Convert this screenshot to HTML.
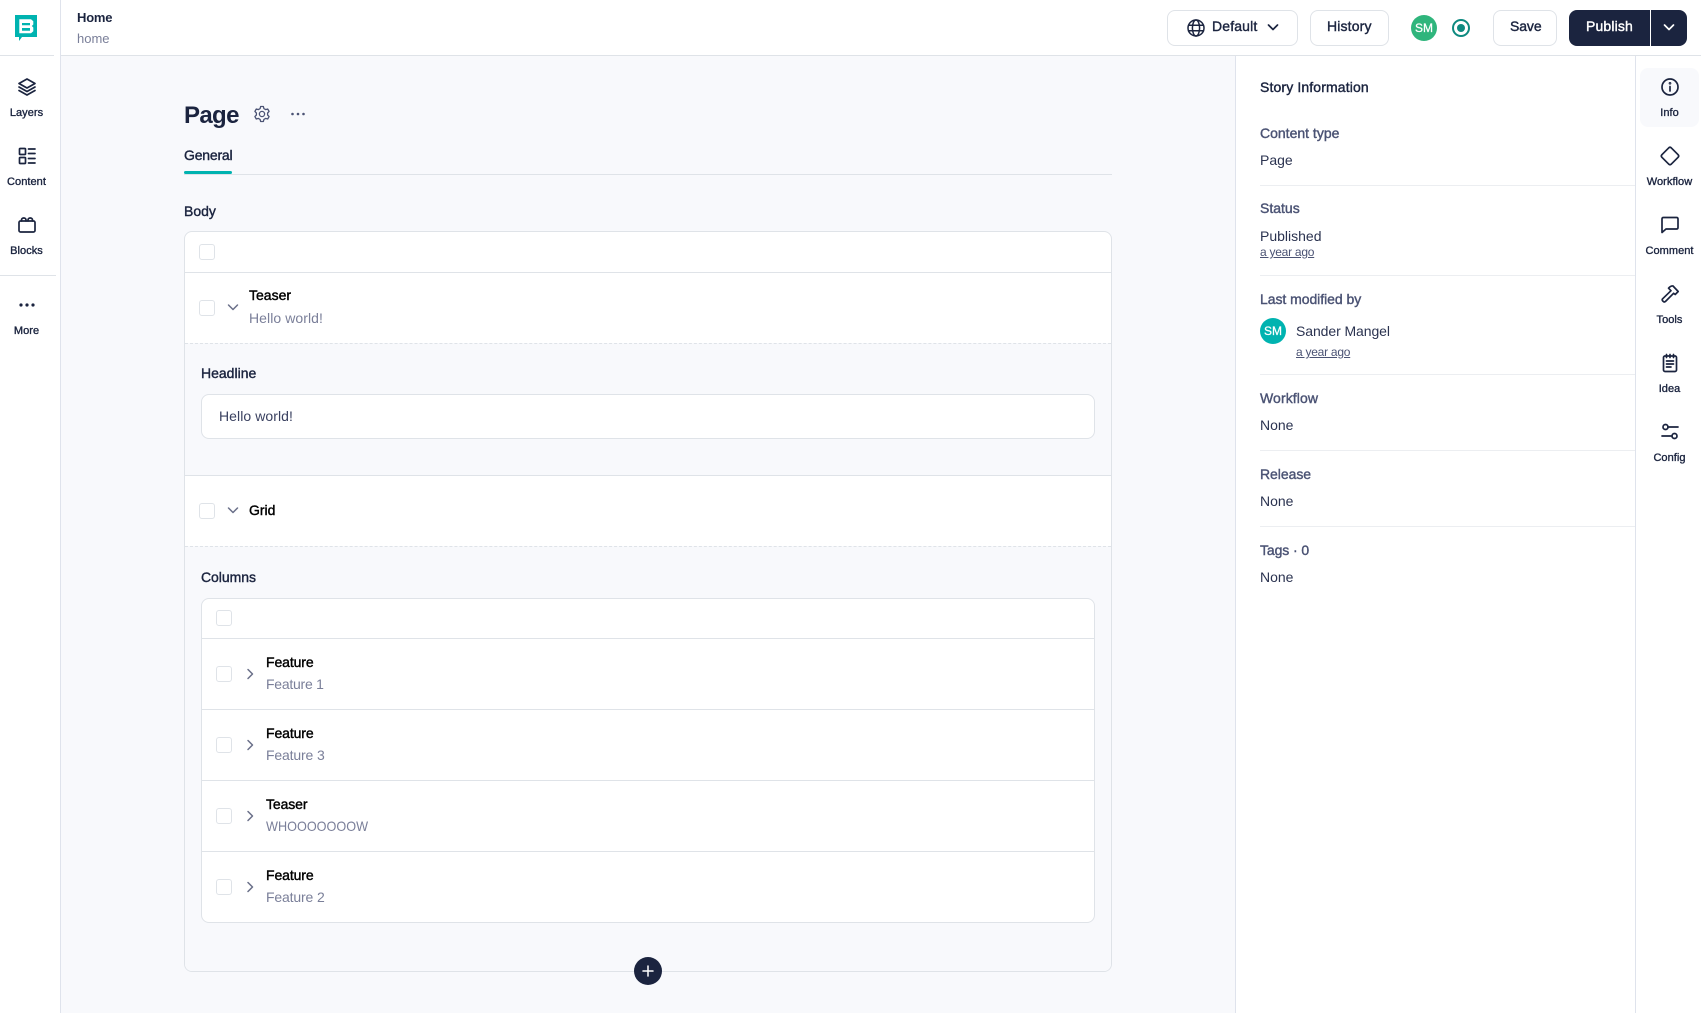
<!DOCTYPE html>
<html lang="en"><head><meta charset="utf-8"><title>Home</title>
<style>
*{box-sizing:border-box}
html,body{margin:0;padding:0}
body{width:1701px;height:1013px;position:relative;overflow:hidden;background:#f8f9fc;font-family:"Liberation Sans",sans-serif;font-size:14px;color:#1b243f}
.a{position:absolute}
.t{position:absolute;white-space:nowrap;line-height:20px;height:20px}
.m{-webkit-text-stroke:.4px currentColor}
.b{font-weight:bold}
.lab{font-size:11px;width:70px;text-align:center;-webkit-text-stroke:.35px currentColor;letter-spacing:.05px}
.mut{color:#4b5374}
.sec{color:#7a7f99}
.blk{color:#000}
.hl{position:absolute;height:1px;background:#dfe3e8}
.hp{position:absolute;height:1px;background:#eceef1;left:1260px;width:375px}
.vl{position:absolute;width:1px;background:#dfe3ec}
.cb{position:absolute;width:16px;height:16px;background:#fff;border:1px solid #dfe3e8;border-radius:3px}
.btn{position:absolute;top:10px;height:36px;background:#fff;border:1px solid #dfe3e8;border-radius:8px}
svg{position:absolute;fill:none;stroke:#1b243f;stroke-width:1.7;stroke-linecap:round;stroke-linejoin:round;overflow:visible}
.ch{stroke:#6a7089;stroke-width:1.5;width:14px;height:14px}
.small{font-size:12px;text-decoration:underline;color:#4b5374;letter-spacing:-.25px}
</style></head><body>

<!-- panels -->
<div class="a" style="left:0;top:0;width:1701px;height:55px;background:#fff"></div>
<div class="a" style="left:0;top:0;width:60px;height:1013px;background:#fff"></div>
<div class="a" style="left:1236px;top:55px;width:465px;height:958px;background:#fff"></div>
<div class="hl" style="left:60px;top:55px;width:1641px"></div>
<div class="hl" style="left:0;top:55px;width:54px"></div>
<div class="hl" style="left:0;top:275px;width:56px"></div>
<div class="vl" style="left:60px;top:0;height:1013px"></div>
<div class="vl" style="left:1235px;top:56px;height:957px"></div>
<div class="vl" style="left:1635px;top:56px;height:957px"></div>

<!-- logo -->
<svg style="left:15px;top:15px;stroke:none" width="22" height="26" viewBox="0 0 22 26"><path fill="#00b3b0" d="M0 0H22V22H7L4 26V22H0Z"/><path fill="#fff" fill-rule="evenodd" d="M4.3 4.3H16L18.3 6.3V9.5L16.8 11L18.3 12.5V16.3L16 18.3H4.3ZM7 8V10.3H15V8ZM7 13V15.7H15V13Z"/></svg>

<!-- left sidebar -->
<svg style="left:17px;top:77px" width="20" height="20" viewBox="0 0 20 20"><path d="M10 2L18 6.5L10 11L2 6.5Z"/><path d="M2 10L10 14.5L18 10"/><path d="M2 13.5L10 18L18 13.5"/></svg>
<div class="t lab" style="left:-8.5px;top:103px">Layers</div>
<svg style="left:17px;top:146px" width="20" height="20" viewBox="0 0 20 20"><rect x="2.5" y="2.5" width="6" height="6" rx=".8"/><rect x="2.5" y="11.5" width="6" height="6" rx=".8"/><path d="M11.5 3H18M11.5 7.5H18M11.5 12.5H18M11.5 17H18"/></svg>
<div class="t lab" style="left:-8.5px;top:172px">Content</div>
<svg style="left:17px;top:215px" width="20" height="20" viewBox="0 0 20 20"><rect x="2" y="6" width="16" height="11" rx="1.5"/><path d="M4.5 6V5A2 2 0 0 1 6.5 3H7A2 2 0 0 1 9 5V6M11 6V5A2 2 0 0 1 13 3H13.5A2 2 0 0 1 15.5 5V6"/></svg>
<div class="t lab" style="left:-8.5px;top:241px">Blocks</div>
<svg style="left:17px;top:295px;stroke:none;fill:#1b243f" width="20" height="20" viewBox="0 0 20 20"><circle cx="4" cy="10" r="1.6"/><circle cx="10" cy="10" r="1.6"/><circle cx="16" cy="10" r="1.6"/></svg>
<div class="t lab" style="left:-8.5px;top:321px">More</div>

<!-- header -->
<div class="t b" style="left:77px;top:8px;font-size:13px;letter-spacing:-.2px">Home</div>
<div class="t sec" style="left:77px;top:29px;font-size:13px">home</div>

<div class="btn" style="left:1167px;width:131px"></div>
<svg style="left:1187px;top:19px;stroke-width:1.5" width="18" height="18" viewBox="0 0 18 18"><circle cx="9" cy="9" r="8"/><ellipse cx="9" cy="9" rx="3.6" ry="8"/><path d="M1.5 6.2H16.5M1.5 11.8H16.5"/></svg>
<div class="t m" style="left:1212px;top:16px;letter-spacing:.15px">Default</div>
<svg style="left:1266px;top:20px;width:14px;height:14px" viewBox="0 0 14 14"><path d="M2.5 5L7 9.5L11.5 5"/></svg>

<div class="btn" style="left:1310px;width:79px"></div>
<div class="t m" style="left:1327px;top:16px;letter-spacing:.15px">History</div>

<div class="a" style="left:1411px;top:15px;width:26px;height:26px;border-radius:50%;background:#2fb57c;color:#fff;font-size:12px;line-height:27px;text-align:center;-webkit-text-stroke:.25px #fff">SM</div>
<div class="a" style="left:1452px;top:19px;width:18px;height:18px;border-radius:50%;border:2px solid #0e8a80"></div>
<div class="a" style="left:1457px;top:24px;width:8px;height:8px;border-radius:50%;background:#0e8a80"></div>

<div class="btn" style="left:1493px;width:64px"></div>
<div class="t m" style="left:1510px;top:16px;letter-spacing:-.1px">Save</div>

<div class="a" style="left:1569px;top:10px;width:81px;height:36px;background:#1b243f;border-radius:8px 0 0 8px"></div>
<div class="a" style="left:1651px;top:10px;width:36px;height:36px;background:#1b243f;border-radius:0 8px 8px 0"></div>
<div class="t m" style="left:1586px;top:16px;color:#fff;letter-spacing:.15px">Publish</div>
<svg style="left:1662px;top:20px;width:14px;height:14px;stroke:#fff" viewBox="0 0 14 14"><path d="M2.5 5L7 9.5L11.5 5"/></svg>

<!-- title -->
<div class="t b" style="left:184px;top:106px;font-size:24px;line-height:20px;letter-spacing:-.65px">Page</div>
<svg style="left:253px;top:105px;stroke:#4b5374;stroke-width:1.3" width="18" height="18" viewBox="0 0 18 18"><circle cx="9" cy="9" r="2.6"/><path d="M7.6 1.5H10.4L10.9 3.6L12.6 4.6L14.7 4L16.1 6.4L14.6 8V10L16.1 11.6L14.7 14L12.6 13.4L10.9 14.4L10.4 16.5H7.6L7.1 14.4L5.4 13.4L3.3 14L1.9 11.6L3.4 10V8L1.9 6.4L3.3 4L5.4 4.6L7.1 3.6Z"/></svg>
<svg style="left:290px;top:105px;stroke:none;fill:#4b5374" width="16" height="18" viewBox="0 0 16 18"><circle cx="2.5" cy="9" r="1.3"/><circle cx="8" cy="9" r="1.3"/><circle cx="13.5" cy="9" r="1.3"/></svg>

<div class="t m" style="left:184px;top:145px;letter-spacing:-.2px">General</div>
<div class="hl" style="left:184px;top:174px;width:928px"></div>
<div class="a" style="left:184px;top:171px;width:48px;height:3px;background:#00b3b0;border-radius:2px"></div>

<div class="t m" style="left:184px;top:201px">Body</div>

<!-- outer card -->
<div class="a" style="left:184px;top:231px;width:928px;height:741px;background:#fff;border:1px solid #dfe3e8;border-radius:8px;overflow:hidden">
  <div class="a" style="left:0;top:40px;width:926px;height:1px;background:#dfe3e8"></div>
  <div class="a" style="left:0;top:111px;width:926px;height:133px;background:#f8f9fc;border-top:1px dashed #dfe3e8;border-bottom:1px solid #dfe3e8"></div>
  <div class="a" style="left:0;top:314px;width:926px;height:426px;background:#f8f9fc;border-top:1px dashed #dfe3e8"></div>
</div>
<div class="cb" style="left:199px;top:244px"></div>

<div class="cb" style="left:199px;top:300px"></div>
<svg class="ch" style="left:226px;top:300px" viewBox="0 0 14 14"><path d="M2.5 5L7 9.5L11.5 5"/></svg>
<div class="t m blk" style="left:249px;top:285px">Teaser</div>
<div class="t sec" style="left:249px;top:308px;letter-spacing:.07px">Hello world!</div>

<div class="t m" style="left:201px;top:363px">Headline</div>
<div class="a" style="left:201px;top:394px;width:894px;height:45px;background:#fff;border:1px solid #dfe3e8;border-radius:8px"></div>
<div class="t" style="left:219px;top:406px;color:#3a4160;letter-spacing:.07px">Hello world!</div>

<div class="cb" style="left:199px;top:503px"></div>
<svg class="ch" style="left:226px;top:503px" viewBox="0 0 14 14"><path d="M2.5 5L7 9.5L11.5 5"/></svg>
<div class="t m blk" style="left:249px;top:500px">Grid</div>

<div class="t m" style="left:201px;top:567px;letter-spacing:-.05px">Columns</div>

<!-- inner card -->
<div class="a" style="left:201px;top:598px;width:894px;height:325px;background:#fff;border:1px solid #dfe3e8;border-radius:8px"></div>
<div class="hl" style="left:201px;top:638px;width:894px"></div>
<div class="hl" style="left:201px;top:709px;width:894px"></div>
<div class="hl" style="left:201px;top:780px;width:894px"></div>
<div class="hl" style="left:201px;top:851px;width:894px"></div>
<div class="cb" style="left:216px;top:610px"></div>

<div class="cb" style="left:216px;top:666px"></div>
<svg class="ch" style="left:243px;top:667px" viewBox="0 0 14 14"><path d="M5 2.5L9.5 7L5 11.5"/></svg>
<div class="t m blk" style="left:266px;top:652px;letter-spacing:-.1px">Feature</div>
<div class="t sec" style="left:266px;top:674px;letter-spacing:-.25px">Feature 1</div>

<div class="cb" style="left:216px;top:737px"></div>
<svg class="ch" style="left:243px;top:738px" viewBox="0 0 14 14"><path d="M5 2.5L9.5 7L5 11.5"/></svg>
<div class="t m blk" style="left:266px;top:723px;letter-spacing:-.1px">Feature</div>
<div class="t sec" style="left:266px;top:745px;letter-spacing:-.15px">Feature 3</div>

<div class="cb" style="left:216px;top:808px"></div>
<svg class="ch" style="left:243px;top:809px" viewBox="0 0 14 14"><path d="M5 2.5L9.5 7L5 11.5"/></svg>
<div class="t m blk" style="left:266px;top:794px;letter-spacing:-.1px">Teaser</div>
<div class="t sec" style="left:266px;top:816px;transform:scaleX(.905);transform-origin:left center">WHOOOOOOOW</div>

<div class="cb" style="left:216px;top:879px"></div>
<svg class="ch" style="left:243px;top:880px" viewBox="0 0 14 14"><path d="M5 2.5L9.5 7L5 11.5"/></svg>
<div class="t m blk" style="left:266px;top:865px;letter-spacing:-.1px">Feature</div>
<div class="t sec" style="left:266px;top:887px;letter-spacing:-.15px">Feature 2</div>

<!-- plus -->
<div class="a" style="left:634px;top:957px;width:28px;height:28px;border-radius:50%;background:#1b243f"></div>
<svg style="left:642px;top:965px;stroke:#fff;stroke-width:1.5" width="12" height="12" viewBox="0 0 12 12"><path d="M1 6H11M6 1V11"/></svg>

<!-- story panel -->
<div class="t m" style="left:1260px;top:77px;letter-spacing:.13px">Story Information</div>
<div class="t m mut" style="left:1260px;top:123px">Content type</div>
<div class="t" style="left:1260px;top:150px;color:#2b3350">Page</div>
<div class="hp" style="top:185px"></div>
<div class="t m mut" style="left:1260px;top:198px">Status</div>
<div class="t" style="left:1260px;top:226px;color:#2b3350">Published</div>
<div class="t small" style="left:1260px;top:242px">a year ago</div>
<div class="hp" style="top:275px"></div>
<div class="t m mut" style="left:1260px;top:289px;letter-spacing:-.05px">Last modified by</div>
<div class="a" style="left:1260px;top:318px;width:26px;height:26px;border-radius:50%;background:#00b3b0;color:#fff;font-size:12px;line-height:27px;text-align:center;-webkit-text-stroke:.25px #fff">SM</div>
<div class="t" style="left:1296px;top:321px;color:#2b3350;letter-spacing:-.08px">Sander Mangel</div>
<div class="t small" style="left:1296px;top:342px">a year ago</div>
<div class="hp" style="top:374px"></div>
<div class="t m mut" style="left:1260px;top:388px;letter-spacing:.1px">Workflow</div>
<div class="t" style="left:1260px;top:415px;color:#2b3350">None</div>
<div class="hp" style="top:450px"></div>
<div class="t m mut" style="left:1260px;top:464px;letter-spacing:-.05px">Release</div>
<div class="t" style="left:1260px;top:491px;color:#2b3350">None</div>
<div class="hp" style="top:526px"></div>
<div class="t m mut" style="left:1260px;top:540px;letter-spacing:-.1px">Tags · 0</div>
<div class="t" style="left:1260px;top:567px;color:#2b3350">None</div>

<!-- right rail -->
<div class="a" style="left:1640px;top:68px;width:59px;height:59px;background:#f8f9fc;border-radius:8px"></div>
<svg style="left:1660px;top:77px" width="20" height="20" viewBox="0 0 20 20"><circle cx="10" cy="10" r="8"/><path d="M10 9.5V14"/><circle cx="10" cy="6.3" r=".5"/></svg>
<div class="t lab" style="left:1634.5px;top:103px">Info</div>
<svg style="left:1660px;top:146px" width="20" height="20" viewBox="0 0 20 20"><path d="M8.8 1.8L1.8 8.8Q.8 10 1.8 11.2L8.8 18.2Q10 19.2 11.2 18.2L18.2 11.2Q19.2 10 18.2 8.8L11.2 1.8Q10 .8 8.8 1.8Z"/></svg>
<div class="t lab" style="left:1634.5px;top:172px">Workflow</div>
<svg style="left:1660px;top:215px" width="20" height="20" viewBox="0 0 20 20"><path d="M2 4Q2 2.5 3.5 2.5H16.5Q18 2.5 18 4V12.5Q18 14 16.5 14H6L2 17.5Z"/></svg>
<div class="t lab" style="left:1634.5px;top:241px">Comment</div>
<svg style="left:1660px;top:284px" width="20" height="20" viewBox="0 0 20 20"><path d="M8.5 4.2Q11 1.5 13 2L18.2 7.5L15.2 10.5L13.6 9.3L5.3 17.6Q4.2 18.4 3.2 17.4L2.6 16.8Q1.8 15.8 2.6 14.8L11 6.7Z"/></svg>
<div class="t lab" style="left:1634.5px;top:310px">Tools</div>
<svg style="left:1660px;top:353px" width="20" height="20" viewBox="0 0 20 20"><rect x="3.5" y="3" width="13" height="15.5" rx="1.5"/><path d="M6.5 1.5V4.5M10 1.5V4.5M13.5 1.5V4.5M6.5 8H13.5M6.5 11H13.5M6.5 14H11"/></svg>
<div class="t lab" style="left:1634.5px;top:379px">Idea</div>
<svg style="left:1660px;top:422px" width="20" height="20" viewBox="0 0 20 20"><circle cx="5.5" cy="5" r="2.5"/><path d="M8 5H18"/><circle cx="14.5" cy="14" r="2.5"/><path d="M2 14H12"/></svg>
<div class="t lab" style="left:1634.5px;top:448px">Config</div>

</body></html>
